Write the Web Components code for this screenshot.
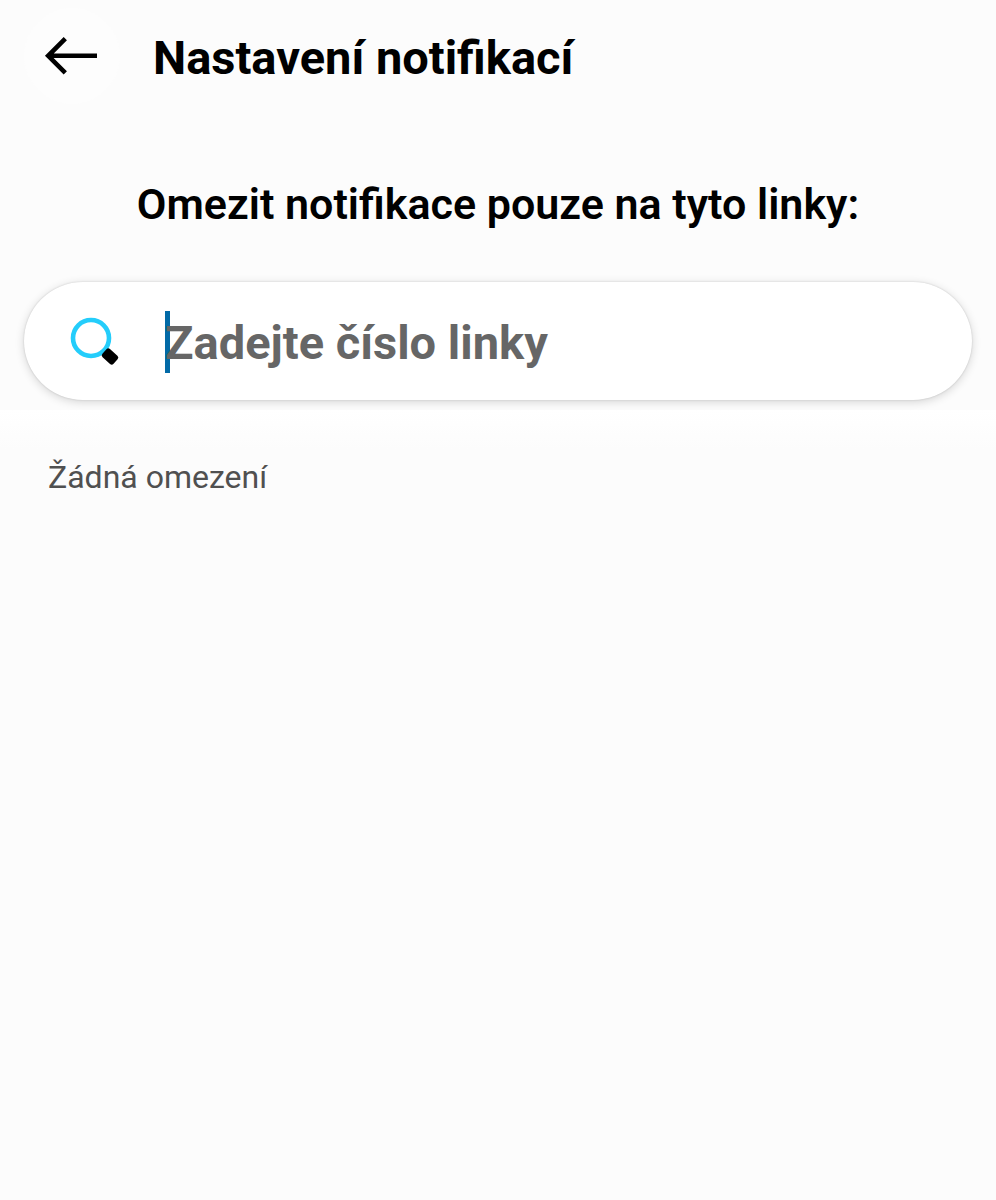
<!DOCTYPE html>
<html lang="cs">
<head>
  <meta charset="utf-8">
  <meta name="viewport" content="width=device-width, initial-scale=1">
  <title>Nastavení notifikací</title>
  <style>
    body {
      margin: 0;
      min-height: 100vh;
      background: #fcfcfc;
      color: #000;
      font-family: Roboto, "Liberation Sans", sans-serif;
    }
  </style>
</head>
<body>
  <settings-page>
    <page-header slot="header">Nastavení notifikací</page-header>
    <line-search slot="search" placeholder="Zadejte číslo linky">Omezit notifikace pouze na tyto linky:</line-search>
    <line-list>Žádná omezení</line-list>
  </settings-page>

  <script>
    (() => {
      class SettingsPage extends HTMLElement {
        constructor() {
          super();
          this.attachShadow({ mode: "open" });

          this.shadowRoot.innerHTML = /* html */ `
            <style>
              :host {
                display: flex;
                flex-direction: column;
              }

              .top {
                padding: 8px 24px 10px;
                overflow: hidden;
              }
            </style>

            <div class="top">
              <slot name="header"></slot>
              <slot name="search"></slot>
            </div>
            <main><slot></slot></main>
          `;
        }
      }

      class PageHeader extends HTMLElement {
        constructor() {
          super();
          this.attachShadow({ mode: "open" });

          this.shadowRoot.innerHTML = /* html */ `
            <style>
              :host {
                display: block;
              }

              header {
                display: flex;
                align-items: center;
                gap: 33px;
              }

              button {
                display: grid;
                place-items: center;
                flex: none;
                width: 96px;
                height: 96px;
                padding: 0;
                border: 0;
                border-radius: 50%;
                background: #fdfdfd;
                cursor: pointer;
              }

              h1 {
                margin: 0;
                padding-top: 4px;
                font-size: 47px;
                line-height: 62px;
                font-weight: 700;
              }
            </style>

            <header>
              <button type="button" aria-label="Zpět">
                <svg width="96" height="96" viewBox="0 0 96 96" fill="none" stroke="#000" stroke-width="4.6" aria-hidden="true">
                  <path d="M73 47.8H24.5M41.3 30.7L24.2 47.8L41.3 64.9" />
                </svg>
              </button>
              <h1><slot></slot></h1>
            </header>
          `;
        }
      }

      class LineSearch extends HTMLElement {
        constructor() {
          super();
          this.attachShadow({ mode: "open" });

          this.shadowRoot.innerHTML = /* html */ `
            <style>
              :host {
                display: block;
              }

              label {
                display: block;
                margin: 72px 0 50px;
                font-size: 43px;
                line-height: 56px;
                font-weight: 600;
                text-align: center;
              }

              .field {
                display: flex;
                align-items: center;
                gap: 45px;
                height: 118px;
                padding: 2px 45px 0;
                box-sizing: border-box;
                border-radius: 60px;
                background: #fff;
                box-shadow: 0 0 2px rgba(0, 0, 0, 0.16), 0 2px 10px rgba(0, 0, 0, 0.16);
              }

              svg {
                flex: none;
              }

              /* the caret is wider than a native one, so it is painted behind the text */
              input {
                flex: 1;
                min-width: 0;
                height: 62px;
                padding: 2px 0 0;
                box-sizing: border-box;
                border: 0;
                outline: 0;
                background: linear-gradient(#026aa7, #026aa7) left / 5px 100% no-repeat;
                color: #000;
                font: 700 47px/62px Roboto, "Liberation Sans", sans-serif;
                caret-color: transparent;
              }

              input::placeholder {
                color: #666;
                opacity: 1;
              }
            </style>

            <label for="line"><slot></slot></label>
            <div class="field">
              <svg width="51" height="51" viewBox="0 0 51 51" aria-hidden="true">
                <circle cx="22" cy="21" r="18" fill="none" stroke="#24cdfb" stroke-width="4.6" />
                <rect x="33.5" y="34" width="15" height="11" rx="2.5" transform="rotate(42 41 39.5)" />
              </svg>
              <input id="line" type="text" autocomplete="off">
            </div>
          `;
        }

        connectedCallback() {
          this.shadowRoot.querySelector("input").placeholder =
            this.getAttribute("placeholder") || "";
        }
      }

      class LineList extends HTMLElement {
        constructor() {
          super();
          this.attachShadow({ mode: "open" });

          this.shadowRoot.innerHTML = /* html */ `
            <style>
              :host {
                display: block;
                padding: 47px 48px;
                background: linear-gradient(#fff, #fcfcfc 40px);
              }

              p {
                margin: 0;
                color: #505050;
                font-size: 32px;
                line-height: 40px;
              }
            </style>

            <p><slot></slot></p>
          `;
        }
      }

      customElements.define("settings-page", SettingsPage);
      customElements.define("page-header", PageHeader);
      customElements.define("line-search", LineSearch);
      customElements.define("line-list", LineList);
    })();
  </script>
</body>
</html>
